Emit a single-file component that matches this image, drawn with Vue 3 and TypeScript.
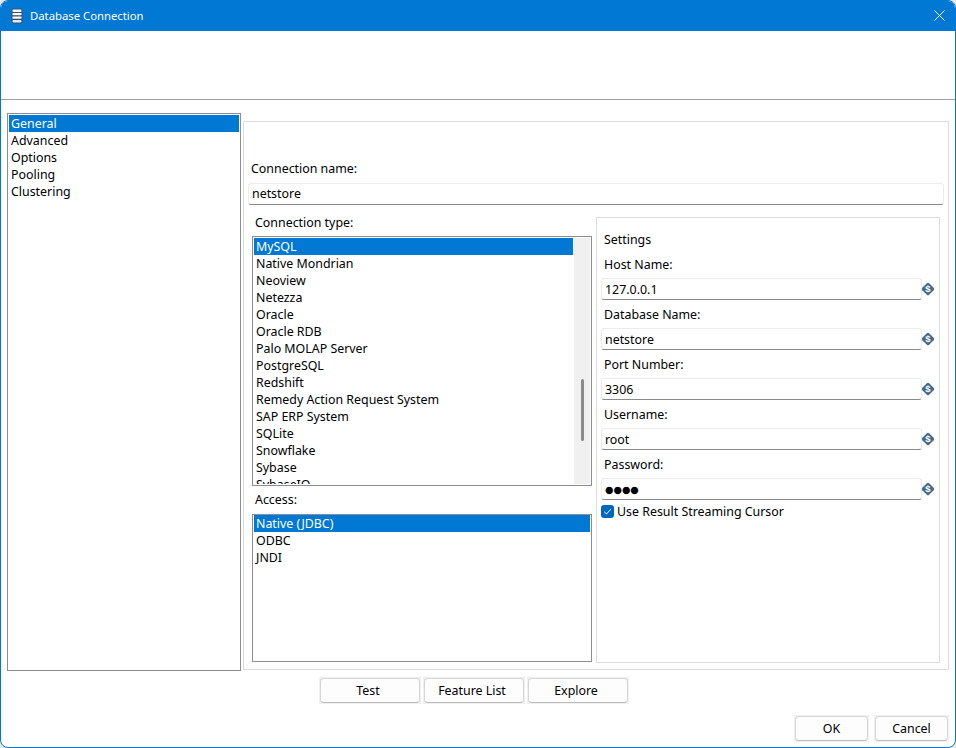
<script setup lang="ts">
const navItems = ['General', 'Advanced', 'Options', 'Pooling', 'Clustering']
const types = ['MySQL', 'Native Mondrian', 'Neoview', 'Netezza', 'Oracle', 'Oracle RDB', 'Palo MOLAP Server', 'PostgreSQL', 'Redshift', 'Remedy Action Request System', 'SAP ERP System', 'SQLite', 'Snowflake', 'Sybase', 'SybaseIQ']
const access = ['Native (JDBC)', 'ODBC', 'JNDI']
const fields = [
  { label: 'Host Name:', value: '127.0.0.1' },
  { label: 'Database Name:', value: 'netstore' },
  { label: 'Port Number:', value: '3306' },
  { label: 'Username:', value: 'root' },
  { label: 'Password:', value: '●●●●', secret: true },
]
const midButtons = ['Test', 'Feature List', 'Explore']
const endButtons = ['OK', 'Cancel']
</script>

<template>
  <div class="window">
    <header class="titlebar">
      <svg class="db-icon" width="12" height="16" viewBox="0 0 12 16">
        <rect x="0.5" y="0.5" width="11" height="15" rx="2.5" fill="#34506e" />
        <rect x="1.5" y="1.5" width="9" height="2.4" rx="1" fill="#fff" />
        <rect x="1.5" y="5" width="9" height="2.2" fill="#fff" />
        <rect x="1.5" y="8.5" width="9" height="2.2" fill="#fff" />
        <rect x="1.5" y="12" width="9" height="2.4" rx="1" fill="#e6ebf1" />
      </svg>
      <span class="title">Database Connection</span>
      <svg class="close" width="11" height="11" viewBox="0 0 11 11">
        <path d="M0.5 0.5 L10.5 10.5 M10.5 0.5 L0.5 10.5" stroke="#fff" stroke-width="1" fill="none" />
      </svg>
    </header>
    <div class="banner"></div>
    <div class="body">
      <nav class="nav">
        <div v-for="(n, i) in navItems" :key="n" class="row" :class="{ sel: i === 0 }">{{ n }}</div>
      </nav>
      <section class="panel">
        <div class="name-label">Connection name:</div>
        <div class="input name-input">netstore</div>
        <div class="columns">
          <div class="left">
            <div class="cap first">Connection type:</div>
            <div class="list types">
              <div class="rows">
                <div v-for="(t, i) in types" :key="t" class="row" :class="{ sel: i === 0 }">{{ t }}</div>
              </div>
              <div class="track"><div class="thumb"></div></div>
            </div>
            <div class="cap second">Access:</div>
            <div class="list access">
              <div class="rows">
                <div v-for="(a, i) in access" :key="a" class="row" :class="{ sel: i === 0 }">{{ a }}</div>
              </div>
            </div>
          </div>
          <div class="settings">
            <div class="set-title">Settings</div>
            <div v-for="f in fields" :key="f.label" class="field">
              <div class="set-label">{{ f.label }}</div>
              <div class="field-row">
                <div class="input set-input" :class="{ secret: f.secret }">{{ f.value }}</div>
                <svg class="var-icon" width="14" height="14" viewBox="0 0 14 14">
                  <rect x="2.2" y="2.2" width="9.6" height="9.6" rx="1.6" transform="rotate(45 7 7)" fill="#45698c" />
                  <text x="7" y="10.4" text-anchor="middle" font-size="9.5" font-weight="700" font-family="Liberation Sans, sans-serif" fill="#fff">$</text>
                </svg>
              </div>
            </div>
            <div class="check-row">
              <span class="check">
                <svg width="13" height="13" viewBox="0 0 13 13">
                  <path d="M3.2 6.8 L5.5 9 L9.8 4.2" stroke="#fff" stroke-width="1" fill="none" />
                </svg>
              </span>
              <span>Use Result Streaming Cursor</span>
            </div>
          </div>
        </div>
      </section>
    </div>
    <div class="actions">
      <div v-for="b in midButtons" :key="b" class="btn-wrap wide"><button class="btn shifted">{{ b }}</button></div>
    </div>
    <div class="footer">
      <div v-for="b in endButtons" :key="b" class="btn-wrap small"><button class="btn">{{ b }}</button></div>
    </div>
  </div>
</template>

<style>
html, body { margin: 0; background: #e9e9e9; }
</style>

<style scoped>
.window {
  width: 956px;
  height: 748px;
  box-sizing: border-box;
  border: 1px solid #0078d4;
  border-radius: 8px;
  background: #fff;
  overflow: hidden;
  display: flex;
  flex-direction: column;
  font-family: "Noto Sans", sans-serif;
  font-size: 12.4px;
  line-height: 17px;
  color: #000;
}
.titlebar {
  height: 30px;
  flex: none;
  background: #0078d4;
  color: #fff;
  display: flex;
  align-items: center;
  padding-left: 10px;
  padding-right: 10px;
}
.db-icon { flex: none; }
.title { margin-left: 7px; font-size: 11.3px; flex: 1; margin-bottom: 1px; }
.close { flex: none; margin-bottom: 1px; }
.banner {
  height: 68px;
  flex: none;
  border-bottom: 1px solid #a0a0a0;
}
.body {
  display: flex;
  flex: none;
  align-items: flex-start;
  gap: 2px;
  padding: 13px 0 0 6px;
}
.nav {
  width: 234px;
  height: 558px;
  box-sizing: border-box;
  border: 1px solid #8c8c94;
  padding: 1px;
}
.row { height: 17px; padding-left: 2px; white-space: nowrap; }
.row.sel { background: #0078d4; color: #fff; }
.panel {
  width: 706px;
  height: 549px;
  margin-top: 8px;
  box-sizing: border-box;
  border: 1px solid #dcdcdc;
  padding-top: 38px;
}
.name-label { margin-left: 7px; margin-bottom: 6px; }
.input {
  height: 22px;
  box-sizing: border-box;
  background: #fff;
  border: 1px solid #ececec;
  border-bottom-color: #8a8a8a;
  border-radius: 3px;
  padding-left: 3px;
  line-height: 19px;
  white-space: nowrap;
}
.name-input { margin-left: 4px; width: 696px; }
.columns { display: flex; align-items: flex-start; margin-top: 8px; gap: 4px; padding-left: 8px; }
.left { width: 340px; flex: none; }
.cap { margin-left: 3px; }
.cap.first { margin-top: 1px; margin-bottom: 5px; }
.cap.second { margin-top: 5px; margin-bottom: 6px; }
.list {
  box-sizing: border-box;
  border: 1px solid #8c8c94;
  padding: 1px;
  display: flex;
  overflow: hidden;
}
.types { height: 250px; }
.access { height: 148px; padding-top: 0; }
.rows { flex: 1; min-width: 0; overflow: hidden; }
.track {
  width: 16px;
  flex: none;
  margin-left: 1px;
  background: #f0f0f0;
  display: flex;
  justify-content: center;
}
.thumb {
  width: 3px;
  height: 62px;
  margin-top: 141px;
  border-radius: 2px;
  background: #8a8a8a;
}
.settings {
  width: 344px;
  height: 446px;
  flex: none;
  box-sizing: border-box;
  margin-top: 4px;
  border: 1px solid #dcdcdc;
  padding: 13px 0 0 4px;
}
.set-title { margin-left: 3px; margin-bottom: 8px; }
.field { margin-bottom: 6px; }
.set-label { margin-left: 3px; margin-bottom: 5px; }
.field-row { display: flex; align-items: center; }
.set-input { width: 321px; flex: none; line-height: 21px; }
.secret { font-family: "DejaVu Sans", sans-serif; font-size: 9.7px; line-height: 21px; }
.var-icon { flex: none; margin-left: -1px; }
.check-row { display: flex; align-items: center; margin-top: -3px; gap: 3px; height: 17px; }
.check {
  width: 13px;
  height: 13px;
  background: #0067c0;
  border-radius: 3px;
  display: block;
  flex: none;
}
.check svg { display: block; }
.actions {
  display: flex;
  flex: none;
  gap: 2px;
  margin-top: 6px;
  padding-left: 318px;
}
.footer {
  display: flex;
  flex: none;
  justify-content: flex-end;
  gap: 5px;
  margin-top: 11px;
  padding-right: 6px;
}
.btn-wrap {
  box-sizing: border-box;
  height: 27px;
  padding: 1px;
  background: #f0f0f0;
}
.btn-wrap.wide { width: 102px; }
.btn-wrap.small { width: 75px; }
.btn {
  display: block;
  box-sizing: border-box;
  width: 100%;
  height: 100%;
  border: 1px solid #d6d6d6;
  border-bottom-color: #bcbcbc;
  border-radius: 4px;
  background: #fdfdfd;
  font: inherit;
  color: #000;
  padding: 0;
  -webkit-appearance: none;
  appearance: none;
}
.btn.shifted { padding-right: 4px; }
</style>
